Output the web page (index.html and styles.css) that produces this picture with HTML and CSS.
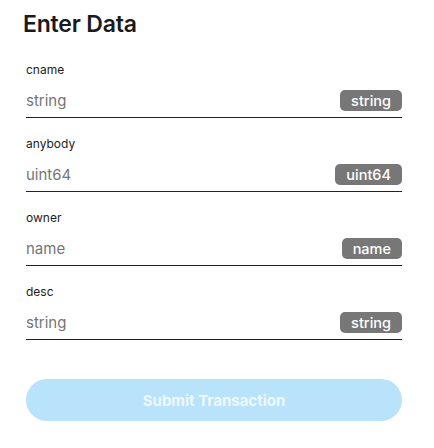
FILE: index.html
```html
<!DOCTYPE html>
<html>
<head>
<meta charset="utf-8">
<link rel="stylesheet" href="styles.css">
</head>
<body>
<div class="panel">
  <h1 class="title">Enter Data</h1>
  <form class="form">
    <div class="field">
      <label class="label">cname</label>
      <div class="input-row">
        <span class="placeholder">string</span>
        <span class="badge">string</span>
      </div>
    </div>
    <div class="field">
      <label class="label">anybody</label>
      <div class="input-row">
        <span class="placeholder">uint64</span>
        <span class="badge">uint64</span>
      </div>
    </div>
    <div class="field">
      <label class="label">owner</label>
      <div class="input-row">
        <span class="placeholder">name</span>
        <span class="badge">name</span>
      </div>
    </div>
    <div class="field">
      <label class="label">desc</label>
      <div class="input-row">
        <span class="placeholder">string</span>
        <span class="badge">string</span>
      </div>
    </div>
    <button type="button" class="submit">Submit Transaction</button>
  </form>
</div>
</body>
</html>
```

FILE: styles.css
```css
* { box-sizing: border-box; }
body {
  margin: 0;
  background: #ffffff;
  font-family: "Inter", "Noto Sans", sans-serif;
  color: #1c1c1c;
}
.panel {
  padding: 9px 32px 0 26px;
  width: 434px;
}
.title {
  margin: 0 0 0 -3px;
  font-size: 23px;
  font-weight: 600;
  line-height: 30px;
  color: #1a1a1a;
  letter-spacing: -0.2px;
}
.form {
  display: flex;
  flex-direction: column;
  margin-top: 23px;
}
.field {
  display: flex;
  flex-direction: column;
  height: 74px;
}
.label {
  font-size: 12px;
  line-height: 16px;
  font-weight: 400;
  color: #1c1c1c;
}
.input-row {
  display: flex;
  align-items: center;
  justify-content: space-between;
  margin-top: 6px;
  height: 34px;
  border-bottom: 1.5px solid #222;
}
.placeholder {
  font-size: 15px;
  color: #757575;
}
.badge {
  background: #777777;
  color: #ffffff;
  font-size: 14.5px;
  font-weight: 500;
  line-height: 21px;
  padding: 0 11px;
  border-radius: 5px;
}
.submit {
  margin-top: 21px;
  height: 42px;
  width: 376px;
  border: none;
  border-radius: 21px;
  background: #b8e3fb;
  color: #eef8fe;
  font-family: inherit;
  font-size: 15px;
  font-weight: 700;
}
```
